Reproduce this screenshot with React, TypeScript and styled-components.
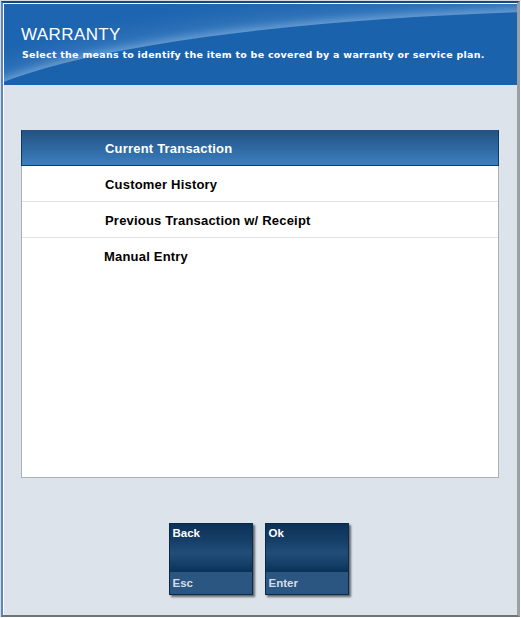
import React from "react";
import styled, { createGlobalStyle } from "styled-components";

const Global = createGlobalStyle`
  html, body { margin: 0; padding: 0; background: #ffffff; }
  body { font-family: "Liberation Sans", Arial, sans-serif; }
  * { box-sizing: border-box; }
`;

const Window = styled.div`
  width: 521px;
  height: 618px;
  border-top: 1px solid #d3dbe3;
  border-left: 1px solid #d3dbe3;
  border-right: 1px solid #ffffff;
  border-bottom: 1px solid #ffffff;
  display: flex;
`;

const Frame = styled.div`
  flex: 1;
  display: flex;
  flex-direction: column;
  border-top: 2px solid #0f4a86;
  border-left: 2px solid #5f86b0;
  border-right: 3px solid #9aa0a6;
  border-bottom: 2px solid #6e7378;
  box-shadow: inset 1px 1px 0 #ffffff;
  padding: 1px 0 0 1px;
  background: #dce3ea;
`;

const Header = styled.header`
  position: relative;
  height: 81px;
  overflow: hidden;
  background: #1d65b0;
  padding: 21px 0 0 17px;
  color: #ffffff;
  &::before {
    content: "";
    position: absolute;
    left: -60px;
    top: 6px;
    width: 1420px;
    height: 240px;
    border-radius: 50%;
    background: #1b62ad;
    box-shadow: 0 -3px 8px rgba(180, 212, 245, 0.45),
      0 -12px 24px rgba(130, 180, 230, 0.3);
  }
`;

const Title = styled.h1`
  position: relative;
  z-index: 1;
  margin: 0;
  font-family: "Liberation Sans", Arial, sans-serif;
  font-weight: normal;
  font-size: 17px;
  letter-spacing: 0.4px;
  line-height: 20px;
`;

const Subtitle = styled.p`
  position: relative;
  z-index: 1;
  margin: 4px 0 0 1px;
  font-family: "DejaVu Sans", Verdana, sans-serif;
  font-weight: bold;
  font-size: 9.5px;
  letter-spacing: 0.26px;
  line-height: 12px;
`;

const Body = styled.main`
  flex: 1;
  display: flex;
  flex-direction: column;
  align-items: center;
  padding: 45px 18px 0 17px;
`;

const List = styled.div`
  align-self: stretch;
  height: 348px;
  background: #ffffff;
  border: 1px solid #a9b0b7;
  display: flex;
  flex-direction: column;
`;

const Row = styled.div<{ $selected?: boolean; $shift?: number }>`
  height: 36px;
  flex: none;
  display: flex;
  align-items: center;
  padding-top: 2px;
  padding-left: ${(p) => 83 - (p.$shift ?? 0)}px;
  font-family: "Liberation Sans", Arial, sans-serif;
  font-weight: bold;
  font-size: 13px;
  letter-spacing: 0.2px;
  color: ${(p) => (p.$selected ? "#ffffff" : "#000000")};
  background: ${(p) =>
    p.$selected ? "linear-gradient(180deg, #235283 0%, #2e679f 50%, #3b80c1 100%)" : "#ffffff"};
  border-bottom: 1px solid ${(p) => (p.$selected ? "#0d3a66" : "#e2e2e2")};
  margin: ${(p) => (p.$selected ? "-1px -1px 0 -1px" : "0")};
  border-left: ${(p) => (p.$selected ? "1px solid #0d3a66" : "none")};
  border-right: ${(p) => (p.$selected ? "1px solid #0d3a66" : "none")};
  &:last-child {
    border-bottom-color: transparent;
  }
`;

const Buttons = styled.div`
  display: flex;
  gap: 12px;
  margin-top: 45px;
  margin-left: -3px;
`;

const KeyButton = styled.button`
  width: 84px;
  height: 72px;
  padding: 0;
  border: 1px solid #0a2a48;
  display: flex;
  flex-direction: column;
  box-shadow: 2px 2px 2px rgba(0, 0, 0, 0.55);
  font-family: "Liberation Sans", Arial, sans-serif;
  font-weight: bold;
  font-size: 11.5px;
  text-align: left;
  cursor: pointer;
`;

const KeyLabel = styled.span`
  height: 48px;
  padding: 3px 0 0 3px;
  color: #ffffff;
  background: linear-gradient(180deg, #0b3157 0%, #163f68 35%, #214d79 60%, #143e67 85%, #0a3157 100%);
`;

const KeyHint = styled.span`
  flex: 1;
  padding: 5px 0 0 3px;
  color: #d4dde7;
  background: #2a5681;
`;

const rows = [
  { label: "Current Transaction", selected: true },
  { label: "Customer History" },
  { label: "Previous Transaction w/ Receipt" },
  { label: "Manual Entry", shift: 1 },
];

export default function App() {
  return (
    <>
      <Global />
      <Window>
        <Frame>
          <Header>
            <Title>WARRANTY</Title>
            <Subtitle>
              Select the means to identify the item to be covered by a warranty or service plan.
            </Subtitle>
          </Header>
          <Body>
            <List>
              {rows.map((r) => (
                <Row key={r.label} $selected={r.selected} $shift={r.shift}>
                  {r.label}
                </Row>
              ))}
            </List>
            <Buttons>
              <KeyButton>
                <KeyLabel>Back</KeyLabel>
                <KeyHint>Esc</KeyHint>
              </KeyButton>
              <KeyButton>
                <KeyLabel>Ok</KeyLabel>
                <KeyHint>Enter</KeyHint>
              </KeyButton>
            </Buttons>
          </Body>
        </Frame>
      </Window>
    </>
  );
}
